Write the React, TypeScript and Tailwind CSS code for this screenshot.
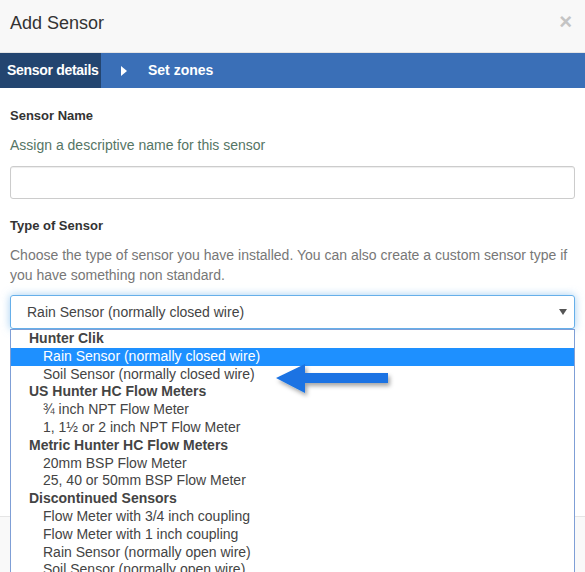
import React from "react";

const groups: { label: string; options: string[] }[] = [
  { label: "Hunter Clik", options: ["Rain Sensor (normally closed wire)", "Soil Sensor (normally closed wire)"] },
  { label: "US Hunter HC Flow Meters", options: ["¾ inch NPT Flow Meter", "1, 1½ or 2 inch NPT Flow Meter"] },
  { label: "Metric Hunter HC Flow Meters", options: ["20mm BSP Flow Meter", "25, 40 or 50mm BSP Flow Meter"] },
  {
    label: "Discontinued Sensors",
    options: [
      "Flow Meter with 3/4 inch coupling",
      "Flow Meter with 1 inch coupling",
      "Rain Sensor (normally open wire)",
      "Soil Sensor (normally open wire)",
    ],
  },
];

export default function App() {
  return (
    <div
      className="w-[585px] h-[572px] overflow-hidden bg-white relative text-[#333]"
      style={{ fontFamily: '"Liberation Sans", Arial, sans-serif' }}
    >
      {/* Header */}
      <div className="h-[53px] bg-[#f8f8f8] border-b border-[#e5e5e5] flex items-center justify-between pl-[10px] pr-[13px]">
        <h4 className="text-[18px] leading-[20px] text-[#333] -mt-[6px]">Add Sensor</h4>
        <span className="text-[22px] leading-[20px] font-bold text-[#c4c4c4] -mt-[8px]">×</span>
      </div>

      {/* Steps bar */}
      <div className="h-[35px] bg-[#3a6fb7] flex items-center text-white font-bold text-[14px] whitespace-nowrap">
        <div className="h-full w-[101px] bg-[#234570] flex items-center pl-[7px] tracking-[-0.3px]">Sensor details</div>
        <svg width="6" height="10" viewBox="0 0 6 10" className="ml-[20px]">
          <path d="M0 0 L6 5 L0 10 Z" fill="#fff" />
        </svg>
        <div className="ml-[21px]">Set zones</div>
      </div>

      {/* Body */}
      <div className="px-[10px]">
        <div className="mt-[19px] text-[13px] leading-[18px] font-bold">Sensor Name</div>
        <div className="mt-[10px] text-[14px] leading-[20px] text-[#557565]">Assign a descriptive name for this sensor</div>
        <div className="mt-[11px] h-[33px] border border-[#ccc] rounded-[3px] shadow-[inset_0_1px_1px_rgba(0,0,0,0.075)]"></div>

        <div className="mt-[18px] text-[13px] leading-[18px] font-bold">Type of Sensor</div>
        <div className="mt-[10px] text-[14px] leading-[20px] text-[#777]">
          Choose the type of sensor you have installed. You can also create a custom sensor type if you have
          something non standard.
        </div>

        <div className="relative mt-[10px]">
          <div className="h-[34px] border border-[#66afe9] rounded-[3px] shadow-[0_0_8px_rgba(102,175,233,0.6)] flex items-center justify-between pl-[16px] pr-[7px]">
            <span className="text-[14px] text-[#444]">Rain Sensor (normally closed wire)</span>
            <svg width="8" height="6" viewBox="0 0 8 6">
              <path d="M0 0 L8 0 L4 6 Z" fill="#555" />
            </svg>
          </div>

          {/* Dropdown list */}
          <div className="absolute left-0 right-0 top-[34px] z-10 bg-white border border-[#7f9fd6] text-[14px] leading-[17.8px] text-[#444] h-[260px]">
            {groups.map((g) => (
              <div key={g.label}>
                <div className="font-bold pl-[18px]">{g.label}</div>
                {g.options.map((o, i) => (
                  <div
                    key={o}
                    className={
                      g.label === "Hunter Clik" && i === 0
                        ? "pl-[32px] bg-[#1e90ff] text-white"
                        : "pl-[32px]"
                    }
                  >
                    {o}
                  </div>
                ))}
              </div>
            ))}
          </div>
        </div>
      </div>

      {/* Footer */}
      <div className="mt-[187px] h-[80px] bg-[#f9f9f9] border-t border-[#e5e5e5]"></div>

      {/* Annotation arrow */}
      <svg
        className="absolute left-[272px] top-[360px] z-20"
        width="124"
        height="42"
        viewBox="0 0 124 42"
      >
        <defs>
          <filter id="sh" x="-20%" y="-40%" width="140%" height="180%">
            <feDropShadow dx="2" dy="3" stdDeviation="2" floodColor="#000" floodOpacity="0.35" />
          </filter>
        </defs>
        <path
          d="M4 18 L33 4 L33 13 L116 13 L116 23 L33 23 L33 33 Z"
          fill="#1a73e3"
          filter="url(#sh)"
        />
      </svg>
    </div>
  );
}
